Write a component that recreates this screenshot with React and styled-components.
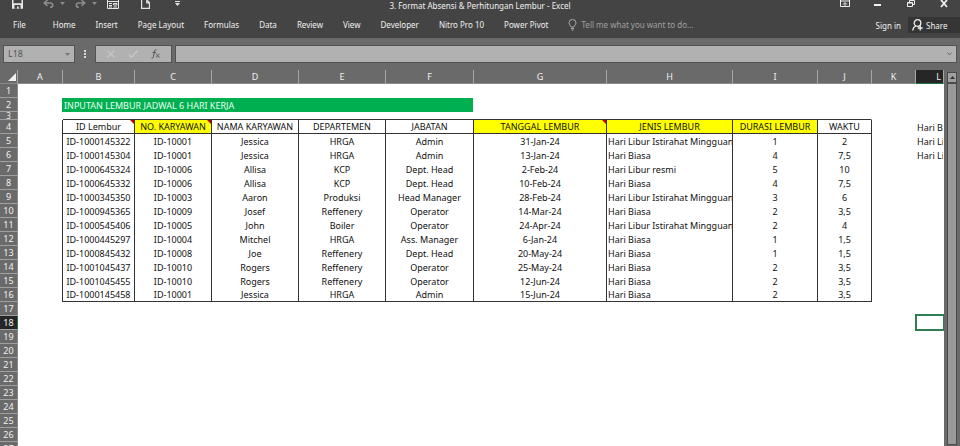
import React from 'react';
import styled, { createGlobalStyle } from 'styled-components';

const GlobalStyle = createGlobalStyle`
    body {
        margin: 0;
        background: #6a6a6a;
        font-family: "Noto Sans", "Open Sans", sans-serif;
        font-size: 8px;
    }
    button, input {
        font: inherit;
        color: inherit;
        margin: 0;
        padding: 0;
        border: 0;
        background: none;
    }
`

const Window = styled.div`
    display: flex;
    flex-direction: column;
    height: 100vh;
    overflow: hidden;
    color: #f0f0f0;
`

const TitleBar = styled.header`
    display: grid;
    grid-template-columns: 1fr auto 1fr;
    height: 12px;
    background: #444444;
`

const Title = styled.h1`
    margin: 0;
    font-size: 8px;
    font-weight: 400;
    line-height: 11px;
`

const QuickAccess = styled.div`
    display: flex;
    padding-left: 1px;
`

const QuickButton = styled.button`
    display: flex;
    justify-content: ${props => props.$split ? 'flex-end' : 'center'};
    gap: 6px;
    width: 32px;
    color: ${props => props.$dim ? '#8e8e8e' : '#e6e6e6'};
`

const WindowControls = styled.div`
    display: flex;
    justify-content: flex-end;
`

const ControlButton = styled.button`
    display: flex;
    justify-content: center;
    width: 33px;
    color: #f0f0f0;
`

const Ribbon = styled.nav`
    display: flex;
    align-items: center;
    height: 26px;
    padding-left: 13px;
    background: #444444;
`

const Tabs = styled.div`
    display: flex;
    gap: 20px;
`

const Tab = styled.button`
    line-height: 16px;
    white-space: nowrap;

    &:first-child {
        margin-right: 7px;
    }
`

const TellMe = styled.label`
    display: flex;
    flex: 1;
    align-items: center;
    gap: 4px;
    margin-left: 20px;
    color: #a8a8a8;
`

const TellMeInput = styled.input`
    width: 140px;
    line-height: 16px;

    &::placeholder {
        color: #a0a0a0;
        opacity: 1;
    }
`

const Account = styled.div`
    display: flex;
    align-items: center;
    gap: 7px;
`

const ShareButton = styled.button`
    display: flex;
    align-items: center;
    gap: 3px;
    width: 52px;
    height: 16px;
    padding-left: 4px;
    background: #353535;
`

const FormulaBar = styled.div`
    display: flex;
    align-items: center;
    height: 32px;
    padding: 0 3px;
    background: #6a6a6a;
`

const Field = styled.div`
    display: flex;
    align-items: center;
    justify-content: space-between;
    box-sizing: border-box;
    height: 18px;
    min-width: 0;
    flex: ${props => props.$width ? `0 0 ${props.$width}` : '1'};
    padding: 0 4px;
    border: 1px solid #535353;
    background: #b1b1b1;
    color: #555555;
`

const FieldInput = styled.input`
    flex: 1;
    min-width: 0;
    font-size: 9px;
    line-height: 14px;
`

const FieldButton = styled.button`
    display: flex;
    color: ${props => props.disabled ? '#c6c6c6' : '#555555'};
`

const Handle = styled.svg`
    margin: 0 9px;
`

const FunctionField = styled(Field)`
    justify-content: space-around;
    margin-right: 3px;
`

const Workbook = styled.main`
    display: flex;
    flex: 1;
    min-height: 0;
`

const SheetArea = styled.div`
    flex: 1;
    min-width: 0;
    overflow: hidden;
    background: #ffffff;
`

const Sheet = styled.table`
    width: 100%;
    table-layout: fixed;
    border-collapse: separate;
    border-spacing: 0;
    color: #111111;
    font-size: 9px;
    line-height: 12px;
`

const Col = styled.col`
    width: ${props => props.$width};
`

const HeadCell = styled.th`
    box-sizing: border-box;
    height: 14px;
    padding: 1px 0 0;
    overflow: hidden;
    border-right: 1px solid #a6a6a6;
    border-bottom: 1px solid ${props => props.$active ? '#217346' : '#8a8a8a'};
    background: ${props => props.$active ? '#262626' : '#6a6a6a'};
    color: #f0f0f0;
    font-weight: 400;
    text-align: ${props => props.$active ? 'right' : 'center'};
    padding-right: ${props => props.$active ? '2px' : '0'};
`

const Corner = styled(HeadCell)`
    text-align: right;

    svg {
        display: block;
        margin-left: auto;
    }
`

const RowHead = styled.th`
    box-sizing: border-box;
    height: ${props => props.$short ? '8px' : '14px'};
    padding: ${props => props.$short ? '0' : '1px 0 0'};
    border-right: 1px solid ${props => props.$active ? '#217346' : '#8a8a8a'};
    border-bottom: 1px solid #a0a0a0;
    background: ${props => props.$active ? '#262626' : '#6a6a6a'};
    color: #f0f0f0;
    font-size: ${props => props.$short ? '8px' : '9px'};
    line-height: ${props => props.$short ? '7px' : '12px'};
    font-weight: 400;
    text-align: center;
`

const Cell = styled.td`
    position: relative;
    box-sizing: border-box;
    padding: 1px 1px 0;
    overflow: ${props => props.$open ? 'visible' : 'hidden'};
    border-right: 1px solid ${props => props.$right || 'transparent'};
    border-bottom: ${props => props.$bottom ? `1px solid ${props.$bottom}` : '0'};
    background: ${props => props.$fill || 'transparent'};
    text-align: ${props => props.$align || 'center'};
    white-space: nowrap;
`

const Spacer = styled(Cell)`
    padding: 0;
`

const Banner = styled(Cell)`
    background: #00b050;
    background-clip: padding-box;
    color: #e8fff0;
`

const Note = styled.span`
    position: absolute;
    top: 0;
    right: 0;
    border-top: 4px solid #c00000;
    border-left: 4px solid transparent;
`

const Selection = styled.div`
    position: absolute;
    inset: -2px -2px -1px -1px;
    border: 2px solid #2f7d52;
`

const ScrollColumn = styled.div`
    display: flex;
    flex-direction: column;
    width: 10px;
    padding: 2px 3px 1px;
    background: #6a6a6a;
`

const ScrollButton = styled.button`
    display: flex;
    align-items: center;
    justify-content: center;
    height: 11px;
    border: 1px solid #4a4a4a;
    background: #a0a0a0;
`

const ScrollThumb = styled.div`
    flex: 1;
    border: 1px solid #4a4a4a;
    background: #999999;
`

const LINE = '#333333'
const YELLOW = '#ffff00'

const tabs = ['File', 'Home', 'Insert', 'Page Layout', 'Formulas', 'Data', 'Review', 'View', 'Developer', 'Nitro Pro 10', 'Power Pivot']

const widths = ['18px', '45px', '72px', '77px', '87px', '87px', '88px', '133px', '126px', '85px', '54px', '44px', 'auto']

const letters = ['A', 'B', 'C', 'D', 'E', 'F', 'G', 'H', 'I', 'J', 'K', 'L']

const headings = [
    { text: 'ID Lembur', note: true },
    { text: 'NO. KARYAWAN', fill: YELLOW, note: true },
    { text: 'NAMA KARYAWAN' },
    { text: 'DEPARTEMEN' },
    { text: 'JABATAN' },
    { text: 'TANGGAL LEMBUR', fill: YELLOW, note: true },
    { text: 'JENIS LEMBUR', fill: YELLOW },
    { text: 'DURASI LEMBUR', fill: YELLOW },
    { text: 'WAKTU' },
]

const records = [
    ['ID-1000145322', 'ID-10001', 'Jessica', 'HRGA', 'Admin', '31-Jan-24', 'Hari Libur Istirahat Mingguan', '1', '2'],
    ['ID-1000145304', 'ID-10001', 'Jessica', 'HRGA', 'Admin', '13-Jan-24', 'Hari Biasa', '4', '7,5'],
    ['ID-1000645324', 'ID-10006', 'Allisa', 'KCP', 'Dept. Head', '2-Feb-24', 'Hari Libur resmi', '5', '10'],
    ['ID-1000645332', 'ID-10006', 'Allisa', 'KCP', 'Dept. Head', '10-Feb-24', 'Hari Biasa', '4', '7,5'],
    ['ID-1000345350', 'ID-10003', 'Aaron', 'Produksi', 'Head Manager', '28-Feb-24', 'Hari Libur Istirahat Mingguan', '3', '6'],
    ['ID-1000945365', 'ID-10009', 'Josef', 'Reffenery', 'Operator', '14-Mar-24', 'Hari Biasa', '2', '3,5'],
    ['ID-1000545406', 'ID-10005', 'John', 'Boiler', 'Operator', '24-Apr-24', 'Hari Libur Istirahat Mingguan', '2', '4'],
    ['ID-1000445297', 'ID-10004', 'Mitchel', 'HRGA', 'Ass. Manager', '6-Jan-24', 'Hari Biasa', '1', '1,5'],
    ['ID-1000845432', 'ID-10008', 'Joe', 'Reffenery', 'Dept. Head', '20-May-24', 'Hari Biasa', '1', '1,5'],
    ['ID-1001045437', 'ID-10010', 'Rogers', 'Reffenery', 'Operator', '25-May-24', 'Hari Biasa', '2', '3,5'],
    ['ID-1001045455', 'ID-10010', 'Rogers', 'Reffenery', 'Operator', '12-Jun-24', 'Hari Biasa', '2', '3,5'],
    ['ID-1000145458', 'ID-10001', 'Jessica', 'HRGA', 'Admin', '15-Jun-24', 'Hari Biasa', '2', '3,5'],
]

// first rows of the lookup list in column L
const lookup = { 4: 'Hari Biasa', 5: 'Hari Libur resmi', 6: 'Hari Libur Istirahat Mingguan' }

const blankRows = [17, 18, 19, 20, 21, 22, 23, 24, 25, 26, 27]

const Caret = () => (
    <svg width="5" height="12" viewBox="0 0 5 12"><path d="M0 2h5L2.5 5z" fill="currentColor" /></svg>
)

const SaveIcon = () => (
    <svg width="11" height="12" viewBox="0 0 11 12">
        <path d="M0 0h1.5v3.2h8V0H11v8.800H0z" fill="currentColor" />
        <path d="M2.500 5h6v3.800h-1.800V6.500H5v2.300H2.500z" fill="#444444" />
    </svg>
)

const UndoIcon = ({ flip }) => (
    <svg width="11" height="12" viewBox="0 0 11 12">
        <g transform={flip ? 'translate(11 0) scale(-1 1)' : undefined} fill="none" stroke="currentColor" strokeWidth="1.5">
            <path d="M4.5 0L1.2 3l3.3 3M1.5 3H7c3.4 0 3.8 3.6.2 4.6" />
        </g>
    </svg>
)

const FormIcon = () => (
    <svg width="12" height="12" viewBox="0 0 12 12" fill="none" stroke="currentColor">
        <path d="M.5 0v8.5h11V0M.5 1.5h11M2 3.5h3M2 5.5h3M2 7h3M6.5 3.5h3.5v1.5H6.5zM6.5 7h3.5" />
    </svg>
)

const PageIcon = () => (
    <svg width="9" height="12" viewBox="0 0 9 12" fill="none" stroke="currentColor" strokeWidth="1.2">
        <path d="M.6 0v8.4h7.8V2.5L5.8 0v2.8h2.6" />
    </svg>
)

const MoreIcon = () => (
    <svg width="5" height="12" viewBox="0 0 5 12"><path d="M0 1h5v1H0zM0 3h5L2.5 6z" fill="currentColor" /></svg>
)

const BulbIcon = () => (
    <svg width="9" height="12" viewBox="0 0 9 12" fill="none" stroke="currentColor">
        <path d="M3 8C3 6.5 1 6 1 3.8a3.5 3.3 0 0 1 7 0C8 6 6 6.5 6 8zM3 9.5h3M3.5 11h2" />
    </svg>
)

const ShareIcon = () => (
    <svg width="11" height="12" viewBox="0 0 11 12" fill="none" stroke="currentColor" strokeWidth="1.3">
        <circle cx="5.5" cy="4" r="3.3" />
        <path d="M.8 11.5C1 8.8 2 7.6 4 7M8.2 6.5v5M5.7 9h5" />
    </svg>
)

const TopBar = () => (
    <TitleBar>
        <QuickAccess>
            <QuickButton aria-label="Save"><SaveIcon /></QuickButton>
            <QuickButton aria-label="Undo" $split $dim><UndoIcon /><Caret /></QuickButton>
            <QuickButton aria-label="Redo" $split $dim><UndoIcon flip /><Caret /></QuickButton>
            <QuickButton aria-label="Form"><FormIcon /></QuickButton>
            <QuickButton aria-label="New"><PageIcon /></QuickButton>
            <QuickButton aria-label="Customize"><MoreIcon /></QuickButton>
        </QuickAccess>
        <Title>3. Format Absensi &amp; Perhitungan Lembur - Excel</Title>
        <WindowControls>
            <ControlButton aria-label="Ribbon display options">
                <svg width="10" height="12" viewBox="0 0 10 12" fill="none" stroke="currentColor">
                    <path d="M.5 0v6.5h9V0M.5 1h9M5 6V3M3 4.5l2-2 2 2" />
                </svg>
            </ControlButton>
            <ControlButton aria-label="Minimize">
                <svg width="7" height="12" viewBox="0 0 7 12"><path d="M0 4h7v2H0z" fill="currentColor" /></svg>
            </ControlButton>
            <ControlButton aria-label="Restore">
                <svg width="8" height="12" viewBox="0 0 8 12" fill="none" stroke="currentColor">
                    <path d="M.5 2.5h5v4h-5zM.5 3h5M2.5 2V.5h5v4H6" />
                </svg>
            </ControlButton>
            <ControlButton aria-label="Close">
                <svg width="8" height="12" viewBox="0 0 8 12"><path d="M1 0l6 7M7 0L1 7" stroke="currentColor" strokeWidth="1.8" /></svg>
            </ControlButton>
        </WindowControls>
    </TitleBar>
)

const RibbonBar = () => (
    <Ribbon>
        <Tabs>
            {tabs.map(tab => <Tab key={tab}>{tab}</Tab>)}
        </Tabs>
        <TellMe>
            <BulbIcon />
            <TellMeInput aria-label="Tell me what you want to do" placeholder="Tell me what you want to do..." />
        </TellMe>
        <Account>
            <button>Sign in</button>
            <ShareButton><ShareIcon /> Share</ShareButton>
        </Account>
    </Ribbon>
)

const FormulaRow = () => (
    <FormulaBar>
        <Field $width="72px">
            <FieldInput aria-label="Name box" defaultValue="L18" />
            <FieldButton aria-label="Show names">
                <svg width="5" height="3" viewBox="0 0 5 3"><path d="M0 0h5L2.5 3z" fill="#777777" /></svg>
            </FieldButton>
        </Field>
        <Handle width="2" height="10" viewBox="0 0 2 10"><path d="M0 1h2v2H0zM0 4h2v2H0zM0 7h2v2H0z" fill="#d8d8d8" /></Handle>
        <FunctionField $width="77px">
            <FieldButton aria-label="Cancel" disabled>
                <svg width="8" height="8" viewBox="0 0 8 8"><path d="M.5.5l7 7M7.5.5l-7 7" stroke="currentColor" strokeWidth="1.2" /></svg>
            </FieldButton>
            <FieldButton aria-label="Enter" disabled>
                <svg width="10" height="8" viewBox="0 0 10 8" fill="none"><path d="M.8 4.5l2.7 2.7L9.3.8" stroke="currentColor" strokeWidth="1.5" /></svg>
            </FieldButton>
            <FieldButton aria-label="Insert function">
                <svg width="9" height="10" viewBox="0 0 9 10" fill="none" stroke="currentColor">
                    <path d="M5.5.8C4 .3 3.6 1.5 3.3 3L2.5 7.5C2.3 9 1.5 9.5.5 9M1.5 3.5h3.5M5 5c1.5-.5 1.2 3.5 3.5 3M8.5 5L5 8.2" />
                </svg>
            </FieldButton>
        </FunctionField>
        <Field>
            <FieldInput aria-label="Formula" />
            <FieldButton aria-label="Expand formula bar">
                <svg width="5" height="4" viewBox="0 0 5 4" fill="none"><path d="M.5.5l2 2.5 2-2.5" stroke="#666666" /></svg>
            </FieldButton>
        </Field>
    </FormulaBar>
)

const DataRow = ({ number, values, last }) => (
    <tr>
        <RowHead scope="row">{number}</RowHead>
        <Cell $right={LINE} />
        {values.map((value, i) => (
            <Cell key={i} $right={LINE} $bottom={last && LINE} $align={i === 6 ? 'left' : 'center'}>{value}</Cell>
        ))}
        <Cell />
        <Cell $align="left">{lookup[number]}</Cell>
    </tr>
)

const Grid = () => (
    <Sheet>
        <colgroup>
            {widths.map((width, i) => <Col key={i} $width={width} />)}
        </colgroup>
        <thead>
            <tr>
                <Corner aria-label="Select all">
                    <svg width="10" height="9" viewBox="0 0 10 9"><path d="M9 0v8H1z" fill="#f0f0f0" /></svg>
                </Corner>
                {letters.map(letter => (
                    <HeadCell key={letter} scope="col" $active={letter === 'L'}>{letter}</HeadCell>
                ))}
            </tr>
        </thead>
        <tbody>
            <tr>
                <RowHead scope="row">1</RowHead>
                <Cell colSpan={12} />
            </tr>
            <tr>
                <RowHead scope="row">2</RowHead>
                <Cell $right="#00b050" />
                <Banner colSpan={5} $align="left">INPUTAN LEMBUR JADWAL 6 HARI KERJA</Banner>
                <Cell colSpan={6} />
            </tr>
            <tr>
                <RowHead scope="row" $short>3</RowHead>
                <Spacer />
                <Spacer colSpan={9} $bottom={LINE} />
                <Spacer colSpan={2} />
            </tr>
            <tr>
                <RowHead scope="row">4</RowHead>
                <Cell $right={LINE} />
                {headings.map(({ text, fill, note }) => (
                    <Cell key={text} $fill={fill} $right={LINE} $bottom={LINE}>
                        {text}
                        {note && <Note />}
                    </Cell>
                ))}
                <Cell />
                <Cell $align="left">{lookup[4]}</Cell>
            </tr>
            {records.map((values, i) => (
                <DataRow key={values[0]} number={i + 5} values={values} last={i === records.length - 1} />
            ))}
            {blankRows.map(number => (
                <tr key={number}>
                    <RowHead scope="row" $active={number === 18}>{number}</RowHead>
                    <Cell colSpan={11} />
                    <Cell $open={number === 18}>{number === 18 && <Selection />}</Cell>
                </tr>
            ))}
        </tbody>
    </Sheet>
)

const App = () => (
    <Window>
        <GlobalStyle />
        <TopBar />
        <RibbonBar />
        <FormulaRow />
        <Workbook>
            <SheetArea>
                <Grid />
            </SheetArea>
            <ScrollColumn>
                <ScrollButton aria-label="Scroll up">
                    <svg width="5" height="3" viewBox="0 0 5 3"><path d="M0 3h5L2.5 0z" fill="#333333" /></svg>
                </ScrollButton>
                <ScrollThumb />
            </ScrollColumn>
        </Workbook>
    </Window>
)

export default App;
